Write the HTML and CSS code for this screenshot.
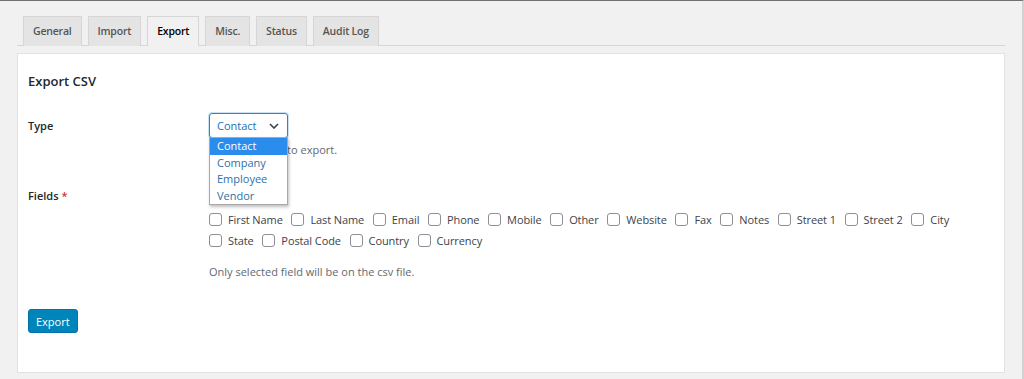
FILE: index.html
```html
<!DOCTYPE html>
<html lang="en">
<head>
    <meta charset="UTF-8">
    <meta name="viewport" content="width=device-width, initial-scale=1.0">
    <title>Settings - Export</title>
    <link rel="stylesheet" href="styles.css">
</head>
<body>
    <div class="frame">
        <!-- Settings tabs -->
        <nav class="tabs">
            <a class="tab">General</a>
            <a class="tab">Import</a>
            <a class="tab active">Export</a>
            <a class="tab">Misc.</a>
            <a class="tab">Status</a>
            <a class="tab">Audit Log</a>
        </nav>

        <div class="panel">
            <h2>Export CSV</h2>

            <form class="form" onsubmit="event.preventDefault()">
                <div class="row">
                    <label class="label">Type</label>
                    <div class="field">
                        <div class="select-wrap">
                            <div class="select">
                                <span>Contact</span>
                                <svg class="chevron" width="10" height="6" viewBox="0 0 10 6"><path d="M1 1l4 4 4-4" fill="none" stroke="#3c434a" stroke-width="1.6"/></svg>
                            </div>
                            <!-- open list of the select -->
                            <ul class="dropdown">
                                <li class="selected">Contact</li>
                                <li>Company</li>
                                <li>Employee</li>
                                <li>Vendor</li>
                            </ul>
                        </div>
                        <p class="description">Select the type to export.</p>
                    </div>
                </div>

                <div class="row fields-row">
                    <label class="label">Fields <span class="required">*</span></label>
                    <div class="field">
                        <div class="check-line">
                            <input type="checkbox" class="box" aria-label="Select all">
                        </div>
                        <div class="checks">
                            <label class="check"><input type="checkbox" class="box">First Name</label>
                            <label class="check"><input type="checkbox" class="box">Last Name</label>
                            <label class="check"><input type="checkbox" class="box">Email</label>
                            <label class="check"><input type="checkbox" class="box">Phone</label>
                            <label class="check"><input type="checkbox" class="box">Mobile</label>
                            <label class="check"><input type="checkbox" class="box">Other</label>
                            <label class="check"><input type="checkbox" class="box">Website</label>
                            <label class="check"><input type="checkbox" class="box">Fax</label>
                            <label class="check"><input type="checkbox" class="box">Notes</label>
                            <label class="check"><input type="checkbox" class="box">Street 1</label>
                            <label class="check"><input type="checkbox" class="box">Street 2</label>
                            <label class="check"><input type="checkbox" class="box">City</label>
                            <label class="check"><input type="checkbox" class="box">State</label>
                            <label class="check"><input type="checkbox" class="box">Postal Code</label>
                            <label class="check"><input type="checkbox" class="box">Country</label>
                            <label class="check"><input type="checkbox" class="box">Currency</label>
                        </div>
                        <p class="note">Only selected field will be on the csv file.</p>
                    </div>
                </div>

                <button type="submit" class="button">Export</button>
            </form>
        </div>
    </div>
</body>
</html>
```

FILE: styles.css
```css
body {
    margin: 0;
    background-color: #f1f1f1;
    font-family: 'Open Sans', 'Noto Sans', sans-serif;
    font-size: 11px;
    color: #3c434a;
}
.frame {
    height: 379px;
    box-sizing: border-box;
    border-top: 1px solid #707070;
    border-right: 2px solid #d2d2d2;
    overflow: hidden;
}
.tabs {
    display: flex;
    gap: 6px;
    margin: 15px 17px 0 17px;
    padding-left: 6px;
    border-bottom: 1px solid #d6d6d6;
    height: 29px;
}
.tab {
    box-sizing: border-box;
    height: 30px;
    padding: 0 9px;
    line-height: 28px;
    background-color: #e4e4e4;
    border: 1px solid #d6d6d6;
    border-bottom: none;
    font-size: 10.5px;
    letter-spacing: -0.2px;
    font-weight: 600;
    color: #555;
    cursor: pointer;
}
.tab.active {
    background-color: #f1f1f1;
    color: #000;
}
.panel {
    margin: 7px 17px 0 17px;
    height: 320px;
    box-sizing: border-box;
    background-color: #fff;
    border: 1px solid #e2e2e2;
    padding: 0 10px;
}
h2 {
    margin: 0;
    padding-top: 17px;
    line-height: 20px;
    font-size: 13px;
    font-weight: 600;
    color: #23282d;
}
.form {
    margin-top: 22px;
}
.row {
    display: grid;
    grid-template-columns: 181px 1fr;
}
.label {
    font-weight: 600;
    color: #23282d;
    line-height: 25px;
}
.required {
    color: #d63638;
}
.select-wrap {
    position: relative;
    width: 79px;
}
.select {
    box-sizing: border-box;
    height: 25px;
    display: flex;
    align-items: center;
    justify-content: space-between;
    padding: 0 8px 0 7px;
    border: 1px solid #2f82c4;
    border-radius: 3px;
    box-shadow: 0 0 0 1px rgba(47, 130, 196, 0.25);
    color: #2271b1;
}
.dropdown {
    position: absolute;
    top: 24px;
    left: 0;
    width: 79px;
    box-sizing: border-box;
    margin: 0;
    padding: 0;
    list-style: none;
    background-color: #fff;
    border: 1px solid #a8a8a8;
    box-shadow: 1px 2px 3px rgba(0, 0, 0, 0.25);
    z-index: 2;
}
.dropdown li {
    height: 16.5px;
    line-height: 16.5px;
    padding-left: 7px;
    color: #2f6fa8;
}
.dropdown li.selected {
    background-color: #2a8ced;
    color: #fff;
}
.description {
    margin: 4px 0 0;
    line-height: 16px;
    color: #646970;
}
.fields-row {
    margin-top: 25px;
}
.fields-row .label {
    line-height: 17px;
    padding-top: 4px;
}
.check-line {
    height: 17px;
    display: flex;
    align-items: center;
}
.checks {
    display: flex;
    flex-wrap: wrap;
    column-gap: 8.7px;
    margin-top: 9px;
}
.check {
    display: flex;
    align-items: center;
    line-height: 21px;
    letter-spacing: -0.1px;
    color: #3c434a;
}
.box {
    appearance: none;
    width: 13px;
    height: 13px;
    margin: 0 6px 0 0;
    border: 1px solid #8c8f94;
    border-radius: 3px;
    background-color: #fff;
}
.note {
    margin: 13px 0 0;
    line-height: 16px;
    color: #646970;
}
.button {
    margin-top: 29px;
    height: 24px;
    padding: 0 7px;
    background-color: #0085ba;
    border: 1px solid #0073aa;
    border-radius: 3px;
    color: #fff;
    font-family: inherit;
    font-size: 11px;
    cursor: pointer;
}
```
